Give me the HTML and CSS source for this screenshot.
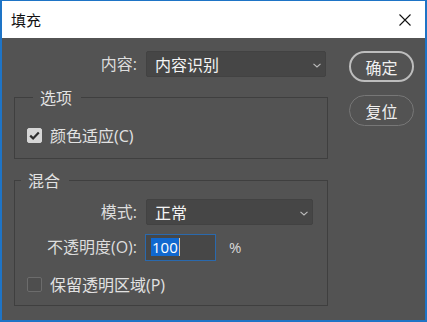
FILE: index.html
```html
<!DOCTYPE html>
<html lang="zh-CN">
<head>
    <meta charset="UTF-8">
    <meta name="viewport" content="width=device-width, initial-scale=1.0">
    <title>填充</title>
    <link rel="stylesheet" href="styles.css">
</head>
<body>
    <div class="dialog">
        <div class="titlebar">
            <span class="title">填充</span>
            <svg class="close" width="12" height="12" viewBox="0 0 12 12">
                <path d="M0.5 0.5 L11.5 11.5 M11.5 0.5 L0.5 11.5" stroke="#111" stroke-width="1.1" fill="none"/>
            </svg>
        </div>
        <div class="content">
            <div class="form">
                <div class="row top-row">
                    <label class="field-label">内容:</label>
                    <div class="select select-content">
                        <span>内容识别</span>
                        <svg class="chevron" width="8" height="5" viewBox="0 0 8 5"><path d="M0.5 0.8 L4 4 L7.5 0.8" stroke="#bdbdbd" stroke-width="1.1" fill="none"/></svg>
                    </div>
                </div>

                <fieldset class="group group-options">
                    <legend>选项</legend>
                    <label class="check">
                        <span class="box checked">
                            <svg width="11" height="9" viewBox="0 0 11 9"><path d="M1.2 4.6 L4.1 7.4 L9.8 1.4" stroke="#2e2e2e" stroke-width="2.2" fill="none"/></svg>
                        </span>
                        颜色适应(C)
                    </label>
                </fieldset>

                <fieldset class="group group-blend">
                    <legend>混合</legend>
                    <div class="row">
                        <label class="field-label">模式:</label>
                        <div class="select select-mode">
                            <span>正常</span>
                            <svg class="chevron" width="8" height="5" viewBox="0 0 8 5"><path d="M0.5 0.8 L4 4 L7.5 0.8" stroke="#bdbdbd" stroke-width="1.1" fill="none"/></svg>
                        </div>
                    </div>
                    <div class="row row-opacity">
                        <label class="field-label">不透明度(O):</label>
                        <div class="number"><span class="selected">100</span><span class="caret"></span></div>
                        <span class="pct">%</span>
                    </div>
                    <label class="check check-last">
                        <span class="box"></span>
                        保留透明区域(P)
                    </label>
                </fieldset>
            </div>

            <div class="buttons">
                <button class="btn btn-default">确定</button>
                <button class="btn">复位</button>
            </div>
        </div>
    </div>
</body>
</html>
```

FILE: styles.css
```css
* {
    box-sizing: border-box;
}

body {
    margin: 0;
    font-family: "Open Sans", "Noto Sans CJK SC", sans-serif;
}

.dialog {
    width: 427px;
    height: 322px;
    border: 2px solid #1e74c6;
    border-top-width: 1px;
    background-color: #535353;
    display: flex;
    flex-direction: column;
}

.titlebar {
    height: 37px;
    background-color: #ffffff;
    display: flex;
    align-items: center;
    justify-content: space-between;
    padding: 0 14px 0 9px;
}

.title {
    font-family: "Noto Sans CJK SC", sans-serif;
    font-size: 15px;
    color: #111;
}

.content {
    flex: 1;
    display: flex;
    padding: 13px 10px 0 12px;
    gap: 21px;
    color: #e0e0e0;
    font-size: 16px;
}

.form {
    width: 314px;
}

.row {
    display: flex;
    align-items: center;
    height: 26px;
}

.field-label {
    width: 122px;
    margin-right: 9px;
    text-align: right;
    color: #dddddd;
    line-height: 26px;
}

.top-row .field-label {
    width: 123px;
}

.select {
    height: 26px;
    background-color: #464646;
    border: 1px solid #424242;
    border-radius: 2px;
    display: flex;
    align-items: center;
    justify-content: space-between;
    padding: 0 4px 0 8px;
    color: #f4f4f4;
    font-family: "Noto Sans CJK SC", sans-serif;
    line-height: 24px;
}

.select-content {
    width: 180px;
}

.select-mode {
    width: 167px;
}

.chevron {
    margin-top: 2px;
}

.group {
    margin: 10px 0 0 0;
    border: 1px solid #3f3f3f;
    padding: 0 0 0 12px;
    min-width: 0;
}

.group legend {
    margin-left: 6px;
    padding: 0 9px 0 7px;
    line-height: 20px;
    font-family: "Noto Sans CJK SC", sans-serif;
    color: #e2e2e2;
}

.group-options {
    height: 72px;
}

.group-options .check {
    margin-top: 17px;
}

.group-blend {
    margin-top: 11px;
    height: 136px;
    padding-left: 0;
}

.group-blend .row {
    margin-top: 9px;
}

.check {
    display: flex;
    align-items: center;
    height: 22px;
    gap: 8px;
    color: #e2e2e2;
}

.check-last {
    margin: 13px 0 0 12px;
}

.box {
    width: 15px;
    height: 15px;
    border-radius: 2px;
    background-color: #4e4e4e;
    border: 1px solid #6c6c6c;
    display: flex;
    align-items: center;
    justify-content: center;
}

.box.checked {
    background-color: #d6d6d6;
    border-color: #d6d6d6;
}

.row-opacity .field-label {
    margin-right: 8px;
}

.number {
    width: 71px;
    height: 27px;
    border: 1px solid #2a69ad;
    background-color: #474747;
    display: flex;
    align-items: center;
    padding-left: 5px;
}

.selected {
    background-color: #1168cf;
    color: #ffffff;
    font-size: 15px;
    line-height: 18px;
    padding: 0 1px;
}

.caret {
    width: 1px;
    height: 18px;
    background-color: #e8c9a0;
}

.pct {
    margin-left: 13px;
    font-size: 15px;
    color: #d9d9d9;
}

.buttons {
    display: flex;
    flex-direction: column;
    gap: 13px;
}

.btn {
    width: 65px;
    height: 31px;
    border-radius: 16px;
    background-color: transparent;
    border: 1px solid #777777;
    color: #f0f0f0;
    font-family: "Noto Sans CJK SC", sans-serif;
    font-size: 16px;
    padding: 0;
}

.btn-default {
    border: 2px solid #bdbdbd;
}
```
